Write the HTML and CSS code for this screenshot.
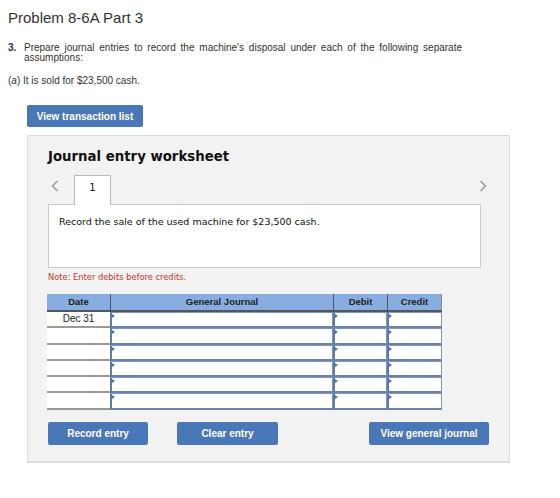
FILE: index.html
```html
<!DOCTYPE html>
<html>
<head>
<meta charset="utf-8">
<link rel="stylesheet" href="styles.css">
</head>
<body>
<h1 class="title">Problem 8-6A Part 3</h1>
<div class="question">
  <span class="qnum">3.</span>
  <p class="qtext">Prepare journal entries to record the machine's disposal under each of the following separate assumptions:</p>
</div>
<p class="sub">(<i>a</i>) It is sold for $23,500 cash.</p>
<button class="btn btn-list">View transaction list</button>

<div class="panel">
  <h2 class="ptitle">Journal entry worksheet</h2>
  <div class="tabs">
    <svg class="arrow" width="8" height="12" viewBox="0 0 8 12"><path d="M6.5 1 L1.5 6 L6.5 11" fill="none" stroke="#9a9a9a" stroke-width="1.5"/></svg>
    <span class="tab">1</span>
    <span class="spacer"></span>
    <svg class="arrow arrow-r" width="8" height="12" viewBox="0 0 8 12"><path d="M1.5 1 L6.5 6 L1.5 11" fill="none" stroke="#9a9a9a" stroke-width="1.5"/></svg>
  </div>
  <div class="desc">Record the sale of the used machine for $23,500 cash.</div>
  <p class="note">Note: Enter debits before credits.</p>
  <div class="table">
    <div class="th c-date">Date</div>
    <div class="th c-gj">General Journal</div>
    <div class="th c-dr">Debit</div>
    <div class="th c-cr">Credit</div>

    <div class="td date">Dec 31</div><div class="td in"></div><div class="td in"></div><div class="td in"></div>
    <div class="td date"></div><div class="td in"></div><div class="td in"></div><div class="td in"></div>
    <div class="td date"></div><div class="td in"></div><div class="td in"></div><div class="td in"></div>
    <div class="td date"></div><div class="td in"></div><div class="td in"></div><div class="td in"></div>
    <div class="td date"></div><div class="td in"></div><div class="td in"></div><div class="td in"></div>
    <div class="td date"></div><div class="td in"></div><div class="td in"></div><div class="td in"></div>
  </div>
  <div class="actions">
    <button class="btn btn-rec">Record entry</button>
    <button class="btn btn-clr">Clear entry</button>
    <span class="spacer"></span>
    <button class="btn btn-view">View general journal</button>
  </div>
</div>
</body>
</html>
```

FILE: styles.css
```css
* { box-sizing: border-box; }
body {
  margin: 0;
  padding: 0 8px;
  background: #fff;
  font-family: "Liberation Sans", Arial, sans-serif;
  color: #333;
}
.title {
  margin: 9px 0 0;
  font-size: 15px;
  font-weight: normal;
  line-height: 18px;
  color: #333;
}
.question {
  display: flex;
  margin-top: 16px;
  font-size: 10px;
  line-height: 10px;
}
.qnum { font-weight: bold; width: 16px; flex: none; }
.qtext {
  margin: 0;
  width: 438px;
  text-align: justify;
}
.sub {
  margin: 12px 0 0;
  font-size: 10px;
  line-height: 11px;
}
.btn {
  border: none;
  border-radius: 2px;
  background: #4a77b7;
  color: #fff;
  font-family: "Liberation Sans", Arial, sans-serif;
  font-weight: bold;
  font-size: 10px;
  height: 22px;
  padding: 0;
}
.btn-list {
  display: block;
  margin: 19px 0 0 19px;
  width: 116px;
}
.panel {
  margin: 8px 0 0 19px;
  width: 483px;
  height: 328px;
  background: #f2f2f2;
  border: 1px solid #ddd;
  border-bottom-width: 2px;
  padding: 0 0 0 20px;
}
.ptitle {
  margin: 12px 0 0;
  font-family: "DejaVu Sans", Verdana, sans-serif;
  font-weight: bold;
  font-size: 13.3px;
  line-height: 18px;
  color: #111;
}
.tabs {
  display: flex;
  align-items: flex-end;
  height: 29px;
  margin-top: 9px;
  width: 439px;
}
.arrow {
  align-self: flex-start;
  margin-top: 5px;
  margin-left: 3px;
  margin-right: 15px;
  flex: none;
}
.arrow-r { margin-left: 0; margin-right: 0; }
.tab {
  width: 37px;
  height: 30px;
  background: #fff;
  border: 1px solid #bbb;
  border-bottom: none;
  text-align: center;
  font-family: "DejaVu Sans", Verdana, sans-serif;
  font-size: 10px;
  line-height: 24px;
  color: #111;
  position: relative;
  z-index: 1;
  margin-bottom: -1px;
}
.spacer { flex: 1; }
.desc {
  width: 433px;
  height: 64px;
  background: #fff;
  border: 1px solid #ccc;
  padding: 11px 10px;
  font-family: "DejaVu Sans", Verdana, sans-serif;
  font-size: 9.5px;
  line-height: 12px;
  color: #111;
}
.note {
  margin: 4px 0 0;
  font-family: "DejaVu Sans", Verdana, sans-serif;
  font-size: 8.3px;
  line-height: 11px;
  color: #c0392b;
}
.table {
  display: grid;
  grid-template-columns: 63px 223px 54px 55px;
  grid-auto-rows: 16.3px;
  grid-template-rows: 18px;
  margin: 11px 0 0 -1px;
  width: 395px;
  font-family: "Liberation Sans", Arial, sans-serif;
  font-size: 9.5px;
}
.th {
  background: #88ade0;
  color: #222;
  font-weight: bold;
  text-align: center;
  line-height: 16px;
  border-bottom: 2px solid #555;
  border-left: 1px solid #555;
}
.th.c-date { border-left: none; }
.th.c-cr { border-right: 1px solid #888; }
.td { background: #fff; }
.date {
  border-bottom: 2px solid #999;
  text-align: center;
  line-height: 14px;
  color: #222;
  font-size: 10px;
}
.in {
  position: relative;
  border: 1px solid #8096b8;
  border-left: 2px solid #5e7aa6;
  border-bottom: 2px solid #6884ae;
}
.in::before {
  content: "";
  position: absolute;
  left: 0;
  top: 1px;
  border-left: 3px solid #3a78d0;
  border-top: 2px solid transparent;
  border-bottom: 2px solid transparent;
}
.actions {
  display: flex;
  margin-top: 12px;
  width: 441px;
}
.btn-rec { width: 100px; height: 23px; }
.btn-clr { width: 101px; height: 23px; margin-left: 29px; }
.btn-view { width: 120px; height: 23px; }
```
